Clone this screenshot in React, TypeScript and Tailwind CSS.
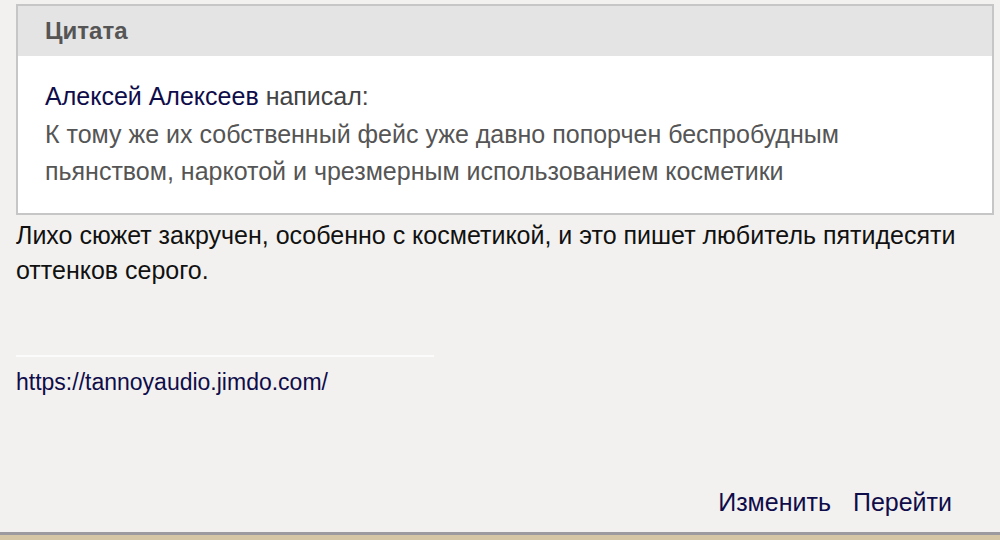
import React from "react";

export default function App() {
  return (
    <div
      className="w-[1000px] h-[540px] bg-[#f2f1ef] flex flex-col overflow-hidden"
      style={{ fontFamily: '"Liberation Sans", Arial, sans-serif' }}
    >
      <div className="flex-1 flex flex-col pl-[16px] pr-[6px] pt-[4px]">
        <div className="border-2 border-[#c6c6c6] bg-white">
          <div className="bg-[#e4e4e4] h-[50px] flex items-center pl-[27px]">
            <span className="text-[24px] font-bold text-[#555555]">Цитата</span>
          </div>
          <div className="pl-[27px] pt-[22px] pb-[22px] text-[25px] leading-[37.5px] text-[#555555]">
            <div>
              <span className="text-[#0f0c4a]">Алексей Алексеев</span>{" "}
              <span className="text-[#444444]">написал:</span>
            </div>
            <div>
              К тому же их собственный фейс уже давно попорчен беспробудным
              <br />
              пьянством, наркотой и чрезмерным использованием косметики
            </div>
          </div>
        </div>
        <div className="pt-[3px] text-[25px] leading-[35px] text-[#111111]">
          Лихо сюжет закручен, особенно с косметикой, и это пишет любитель пятидесяти
          <br />
          оттенков серого.
        </div>
        <div className="mt-[67px] w-[418px] h-[2px] bg-[#fbfbfb]" />
        <div className="mt-[12px] text-[23px] leading-[26px] text-[#0f0c4a]">
          https://tannoyaudio.jimdo.com/
        </div>
        <div className="flex-1" />
        <div className="flex justify-end gap-[22px] pr-[42px] pb-[16px] text-[25px] leading-[28px] text-[#0f0c4a]">
          <span>Изменить</span>
          <span>Перейти</span>
        </div>
      </div>
      <div className="h-[3px] bg-[#9c9a9e]" />
      <div className="h-[5px] bg-[#d5c7a5]" />
    </div>
  );
}
